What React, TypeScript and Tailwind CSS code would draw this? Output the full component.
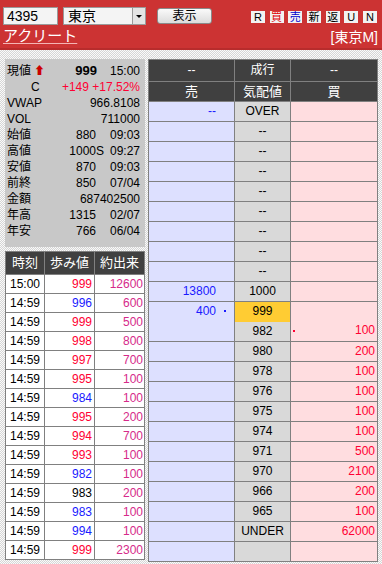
import { Fragment } from 'react';

const font = 'font-["Liberation_Sans","Noto_Sans_CJK_JP",sans-serif]';

const info = [
  { label: '始値', value: '880', time: '09:03' },
  { label: '高値', value: '1000', time: '09:27', mark: 'S' },
  { label: '安値', value: '870', time: '09:03' },
  { label: '前終', value: '850', time: '07/04' },
];

const trades = [
  ['15:00', '999', '12600', 'r'],
  ['14:59', '996', '600', 'b'],
  ['14:59', '999', '500', 'r'],
  ['14:59', '998', '800', 'r'],
  ['14:59', '997', '700', 'r'],
  ['14:59', '995', '100', 'r'],
  ['14:59', '984', '100', 'b'],
  ['14:59', '995', '200', 'r'],
  ['14:59', '994', '700', 'r'],
  ['14:59', '993', '100', 'r'],
  ['14:59', '982', '100', 'b'],
  ['14:59', '983', '200', 'k'],
  ['14:59', '983', '100', 'b'],
  ['14:59', '994', '100', 'b'],
  ['14:59', '999', '2300', 'r'],
];

const priceColor: Record<string, string> = {
  r: 'text-[#ff0033]',
  b: 'text-[#1a1aff]',
  k: 'text-black',
};

type BoardRow = { sell?: string; price: string; buy?: string };

const upper: BoardRow[] = [
  { sell: '--', price: 'OVER' },
  ...Array.from({ length: 8 }, () => ({ price: '--' })),
  { sell: '13800', price: '1000' },
];

const lower: BoardRow[] = [
  { price: '980', buy: '200' },
  { price: '978', buy: '100' },
  { price: '976', buy: '100' },
  { price: '975', buy: '100' },
  { price: '974', buy: '100' },
  { price: '971', buy: '500' },
  { price: '970', buy: '2100' },
  { price: '966', buy: '200' },
  { price: '965', buy: '100' },
  { price: 'UNDER', buy: '62000' },
  { price: '' },
];

function SmallBtn({ children, color = 'text-black' }: { children: string; color?: string }) {
  return (
    <span className={`w-[14px] h-[12px] bg-[#f2f2f2] flex items-center justify-center text-[11px] leading-none overflow-hidden ${color}`}>
      {children}
    </span>
  );
}

function BoardLine({ row }: { row: BoardRow }) {
  return (
    <div className="flex h-[20px] text-[12px] leading-[19px]">
      <div className="w-[86px] border-r border-b border-[#808080] bg-[#dde0ff] text-right pr-[18px] text-[#1a1aff]">
        {row.sell}
      </div>
      <div className="w-[56px] border-r border-b border-[#808080] bg-[#d9d9d9] text-center text-black">
        {row.price}
      </div>
      <div className="w-[87px] border-r border-b border-[#808080] bg-[#ffdde0] text-right pr-[2px] text-[#ff0033]">
        {row.buy}
      </div>
    </div>
  );
}

export default function App() {
  return (
    <div className={`w-[382px] h-[564px] overflow-hidden ${font} bg-[repeating-conic-gradient(#d6d6d6_0_25%,#fafafa_0_50%)] bg-[length:2px_2px]`}>
      {/* header */}
      <div className="h-[50px] bg-[#cc3333] border-b-2 border-[#b82c2c]">
        <div className="flex items-start pt-[7px] pl-[3px]">
          <div className="w-[55px] h-[18px] bg-[#f4f4f4] border border-[#9a9a9a] text-[14px] leading-[16px] pl-[3px] text-black">4395</div>
          <div className="ml-[5px] w-[83px] h-[18px] bg-[#f4f4f4] border border-[#9a9a9a] flex">
            <span className="flex-1 text-[14px] leading-[16px] pl-[4px] text-black">東京</span>
            <span className="w-[13px] h-full bg-[#e4e4e4] border-l border-[#9a9a9a] flex items-center justify-center">
              <span className="w-0 h-0 border-l-[3px] border-r-[3px] border-t-[3px] border-l-transparent border-r-transparent border-t-black" />
            </span>
          </div>
          <div className="ml-[11px] mt-[1px] w-[55px] h-[16px] rounded-[3px] border border-[#8a8a8a] bg-gradient-to-b from-[#fafafa] to-[#dcdcdc] text-[12px] leading-[14px] text-center text-black">
            表示
          </div>
          <div className="ml-auto mr-[5px] mt-[4px] flex gap-[4.7px]">
            <SmallBtn>R</SmallBtn>
            <SmallBtn color="text-[#e00000]">買</SmallBtn>
            <SmallBtn color="text-[#0000cc]">売</SmallBtn>
            <SmallBtn>新</SmallBtn>
            <SmallBtn>返</SmallBtn>
            <SmallBtn>U</SmallBtn>
            <SmallBtn>N</SmallBtn>
          </div>
        </div>
        <div className="flex items-end px-[3px] mt-[3px]">
          <span className="text-white text-[15px] leading-[16px] underline underline-offset-2 decoration-[#f4b4b4]">アクリート</span>
          <span className="ml-auto mr-[1px] text-white text-[14px] leading-[14px]">[東京M]</span>
        </div>
      </div>

      <div className="flex pt-[9px] pl-[5px] gap-[3px]">
        {/* left column */}
        <div className="w-[140px] flex flex-col">
          <div className="h-[188px] bg-[#c8c8c8] pt-[4px] pl-[2px] pr-[5px] text-[12px] leading-[16px] text-black">
            <div className="flex h-[16px]">
              <span className="w-[27px]">現値</span>
              <span className="text-[#cc0000] text-[11px] leading-[16px]">⬆</span>
              <span className="w-[52px] text-right font-bold text-[13px]">999</span>
              <span className="ml-auto">15:00</span>
            </div>
            <div className="flex h-[16px]">
              <span className="pl-[24px]">C</span>
              <span className="ml-auto text-[#ff0033]">+149 +17.52%</span>
            </div>
            <div className="flex h-[16px]">
              <span>VWAP</span>
              <span className="ml-auto">966.8108</span>
            </div>
            <div className="flex h-[16px]">
              <span>VOL</span>
              <span className="ml-auto">711000</span>
            </div>
            {info.map((r) => (
              <div key={r.label} className="flex h-[16px]">
                <span className="w-[30px]">{r.label}</span>
                <span className="w-[59px] text-right relative">
                  {r.value}
                  {r.mark && <span className="absolute left-full">{r.mark}</span>}
                </span>
                <span className="ml-auto">{r.time}</span>
              </div>
            ))}
            <div className="flex h-[16px]">
              <span>金額</span>
              <span className="ml-auto">687402500</span>
            </div>
            <div className="flex h-[16px]">
              <span className="w-[30px]">年高</span>
              <span className="w-[59px] text-right">1315</span>
              <span className="ml-auto">02/07</span>
            </div>
            <div className="flex h-[16px]">
              <span className="w-[30px]">年安</span>
              <span className="w-[59px] text-right">766</span>
              <span className="ml-auto">06/04</span>
            </div>
          </div>

          <div className="mt-[4px] border-l border-t border-[#808080] text-[12px]">
            <div className="flex h-[23px] bg-[#404040] text-white text-[13px] leading-[22px]">
              <div className="w-[39px] border-r border-b border-[#808080] text-center">時刻</div>
              <div className="w-[50px] border-r border-b border-[#808080] text-center">歩み値</div>
              <div className="w-[50px] border-r border-b border-[#808080] text-center">約出来</div>
            </div>
            {trades.map(([t, p, v, c], i) => (
              <div key={i} className="flex h-[19px] bg-white leading-[18px]">
                <div className="w-[39px] border-r border-b border-[#808080] pl-[4px] text-black">{t}</div>
                <div className={`w-[50px] border-r border-b border-[#808080] text-right pr-[2px] ${priceColor[c]}`}>{p}</div>
                <div className="w-[50px] border-r border-b border-[#808080] text-right pr-[1px] text-[#d62a8a]">{v}</div>
              </div>
            ))}
          </div>
        </div>

        {/* order board */}
        <div className="w-[230px] border-l border-t border-[#808080]">
          <div className="flex h-[22px] bg-[#404040] text-white text-[12px] leading-[21px] text-center">
            <div className="w-[86px] border-r border-b border-[#808080]">--</div>
            <div className="w-[56px] border-r border-b border-[#808080]">成行</div>
            <div className="w-[87px] border-r border-b border-[#808080]">--</div>
          </div>
          <div className="flex h-[20px] bg-[#404040] text-white text-[13px] leading-[19px] text-center">
            <div className="w-[86px] border-r border-b border-[#808080]">売</div>
            <div className="w-[56px] border-r border-b border-[#808080]">気配値</div>
            <div className="w-[87px] border-r border-b border-[#808080]">買</div>
          </div>
          {upper.map((r, i) => (
            <BoardLine key={`u${i}`} row={r} />
          ))}
          <div className="flex h-[40px] text-[12px] leading-[19px]">
            <div className="w-[86px] border-r border-b border-[#808080] bg-[#dde0ff] flex items-start text-[#1a1aff]">
              <span className="flex-1 text-right">400</span>
              <span className="w-[18px] flex justify-center pt-[8px]">
                <span className="w-[2px] h-[2px] bg-[#1a1aff]" />
              </span>
            </div>
            <div className="w-[56px] border-r border-b border-[#808080] flex flex-col text-center text-black">
              <div className="h-[20px] bg-[#ffcc33]">999</div>
              <div className="flex-1 bg-[#d9d9d9]">982</div>
            </div>
            <div className="w-[87px] border-r border-b border-[#808080] bg-[#ffdde0] flex items-end pb-[1px] text-[#ff0033]">
              <span className="w-[4px] flex justify-end pb-[8px]">
                <span className="w-[2px] h-[2px] bg-[#ff0033]" />
              </span>
              <span className="flex-1 text-right pr-[2px]">100</span>
            </div>
          </div>
          {lower.map((r, i) => (
            <BoardLine key={`l${i}`} row={r} />
          ))}
        </div>
      </div>
    </div>
  );
}
